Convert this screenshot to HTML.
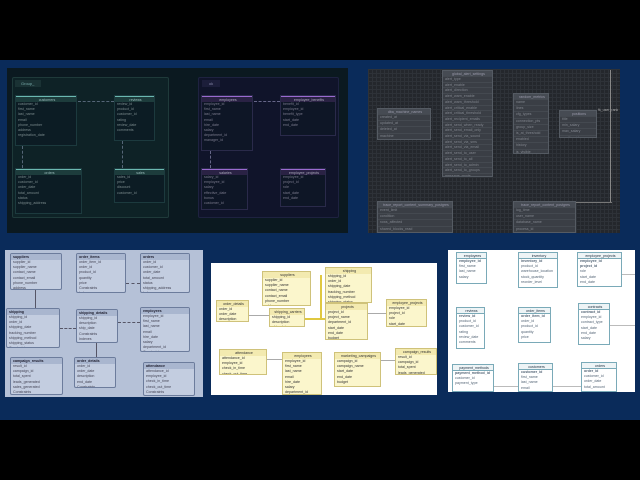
<!DOCTYPE html>
<html><head><meta charset="utf-8"><style>
*{margin:0;padding:0;box-sizing:border-box}
body{width:640px;height:480px;background:#000;position:relative;overflow:hidden;font-family:"Liberation Sans",sans-serif}
.band{position:absolute;left:0;top:60px;width:640px;height:360px;background:#0a2b5a}
.p{position:absolute;overflow:hidden}
.t{position:absolute;overflow:hidden;font-size:3.6px;line-height:5.2px;white-space:nowrap}
.t .h{text-align:center;height:6px;line-height:6px}
.t div{padding-left:2px}
.l{position:absolute}
.d1{background:#0c1c24;border:1px solid #1c3a3e}
.d1 .h{background:#1d3c3c;border-top:1px solid #6bb8b0;color:#9bb}
.d1 div{color:#7a8a8c}
.d1p{background:#0e1626;border:1px solid #2a2a4a}
.d1p .h{background:#2a2244;border-top:1px solid #9a6ad0;color:#aab}
.d1p div{color:#7a7a8c}
.g{background:#3a3e45;border:1px solid #555b63}
.g .h{background:#464b53;color:#99a}
.g div{color:#80858d;border-bottom:1px solid #444950}
.b{background:#c3cde0;border:1px solid #6c7c9c;border-radius:2px}
.b .h{background:#a9b6cf;color:#223;text-align:left;font-weight:bold}
.b div{color:#445}
.y{background:#fbf6cc;border:1px solid #cfc27a}
.y .h{background:#f3eab0;color:#333}
.y div{color:#333}
.w{background:#fff;border:1px solid #7aaab8}
.w .h{background:#eef4f6;border-bottom:1px solid #7aaab8;color:#234}
.w div{color:#567}
</style></head><body>
<div class="band"></div>

<div class="p" style="left:7px;top:68px;width:341px;height:165px;background:#0b1920"></div>
<div class="p" style="left:12px;top:77px;width:157px;height:141px;background:#0e2226;border:1px solid #1f3a3a;border-radius:2px"></div>
<div class="p" style="left:15px;top:80px;width:26px;height:7px;background:#1a3234;color:#7aa;font-size:4px;line-height:7px;padding-left:6px">Group_</div>
<div class="p" style="left:198px;top:77px;width:141px;height:141px;background:#10142a;border:1px solid #1e2240;border-radius:2px"></div>
<div class="p" style="left:202px;top:80px;width:18px;height:7px;background:#1c1e3a;color:#88a;font-size:4px;line-height:7px;text-align:center">ok</div>

<div class="t d1" style="left:15px;top:95px;width:62px;height:51px"><div class="h">customers</div><div>customer_id</div><div>first_name</div><div>last_name</div><div>email</div><div>phone_number</div><div>address</div><div>registration_date</div></div>
<div class="t d1" style="left:114px;top:95px;width:41px;height:46px"><div class="h">reviews</div><div>review_id</div><div>product_id</div><div>customer_id</div><div>rating</div><div>review_date</div><div>comments</div></div>
<div class="t d1" style="left:15px;top:168px;width:67px;height:46px"><div class="h">orders</div><div>order_id</div><div>customer_id</div><div>order_date</div><div>total_amount</div><div>status</div><div>shipping_address</div></div>
<div class="t d1" style="left:114px;top:168px;width:51px;height:35px"><div class="h">sales</div><div>sales_id</div><div>price</div><div>discount</div><div>customer_id</div></div>
<div class="t d1p" style="left:201px;top:95px;width:52px;height:56px"><div class="h">employees</div><div>employee_id</div><div>first_name</div><div>last_name</div><div>email</div><div>hire_date</div><div>salary</div><div>department_id</div><div>manager_id</div></div>
<div class="t d1p" style="left:280px;top:95px;width:56px;height:41px"><div class="h">employee_benefits</div><div>benefit_id</div><div>employee_id</div><div>benefit_type</div><div>start_date</div><div>end_date</div></div>
<div class="t d1p" style="left:201px;top:168px;width:47px;height:42px"><div class="h">salaries</div><div>salary_id</div><div>employee_id</div><div>salary</div><div>effective_date</div><div>bonus</div><div>customer_id</div></div>
<div class="t d1p" style="left:280px;top:168px;width:46px;height:39px"><div class="h">employee_projects</div><div>employee_id</div><div>project_id</div><div>role</div><div>start_date</div><div>end_date</div></div>
<div class="l" style="left:78px;top:101px;width:36px;border-top:1px dashed #567"></div>
<div class="l" style="left:254px;top:101px;width:26px;border-top:1px dashed #668"></div>
<div class="l" style="left:22px;top:146px;height:22px;border-left:1px dashed #567"></div>
<div class="l" style="left:122px;top:141px;height:27px;border-left:1px dashed #567"></div>
<div class="l" style="left:210px;top:151px;height:17px;border-left:1px dashed #668"></div>

<div class="p" style="left:368px;top:69px;width:252px;height:164px;background-color:#24272c;background-image:linear-gradient(#2e3238 1px,transparent 1px),linear-gradient(90deg,#2e3238 1px,transparent 1px);background-size:4px 4px"></div>
<div class="l" style="left:610px;top:70px;height:132px;border-left:1px solid #888"></div>
<div class="l" style="left:520px;top:202px;width:92px;border-top:1px solid #777"></div>
<div class="t g" style="left:377px;top:108px;width:54px;height:32px"><div class="h">dba_machine_names</div><div>created_at</div><div>updated_at</div><div>deleted_at</div><div>machine</div><div>id</div></div>
<div class="t g" style="left:442px;top:70px;width:51px;height:107px;line-height:4.7px"><div class="h">global_alert_settings</div><div>alert_type</div><div>alert_enable</div><div>alert_direction</div><div>alert_warn_enable</div><div>alert_warn_threshold</div><div>alert_critical_enable</div><div>alert_critical_threshold</div><div>alert_recipient_emails</div><div>alert_send_when_ready</div><div>alert_send_email_only</div><div>alert_send_via_sound</div><div>alert_send_via_sms</div><div>alert_send_via_email</div><div>alert_send_to_user</div><div>alert_send_to_all</div><div>alert_send_to_admin</div><div>alert_send_to_groups</div><div>message_mode</div><div>alert_send_via_slack</div><div>id</div></div>
<div class="t g" style="left:513px;top:93px;width:36px;height:61px"><div class="h">random_metrics</div><div>name</div><div>lines</div><div>cfg_types</div><div>connection_pts</div><div>group_size</div><div>is_at_threshold</div><div>enabled</div><div>history</div><div>is_visible</div><div>open_at</div><div>id</div></div>
<div class="t g" style="left:559px;top:110px;width:38px;height:28px"><div class="h">positions</div><div>title</div><div>min_salary</div><div>max_salary</div><div>position_id</div></div>
<div class="t g" style="left:377px;top:201px;width:76px;height:32px"><div class="h">trace_report_content_summary_postgres</div><div>event_limit</div><div>condition</div><div>rows_affected</div><div>shared_blocks_read</div><div>shared_blocks_written</div></div>
<div class="t g" style="left:513px;top:201px;width:63px;height:32px"><div class="h">trace_report_content_postgres</div><div>log_time</div><div>user_name</div><div>database_name</div><div>process_id</div><div>connection_from</div></div>
<div class="p" style="left:598px;top:108px;color:#aaa;font-size:3.5px">fk_user_rank</div>

<div class="p" style="left:5px;top:250px;width:198px;height:147px;background:#b5c1d7"></div>
<div class="t b" style="left:10px;top:253px;width:52px;height:37px"><div class="h">suppliers</div><div>supplier_id</div><div>supplier_name</div><div>contact_name</div><div>contact_email</div><div>phone_number</div><div>address</div><div>Constraints</div></div>
<div class="t b" style="left:76px;top:253px;width:50px;height:40px"><div class="h">order_items</div><div>order_item_id</div><div>order_id</div><div>product_id</div><div>quantity</div><div>price</div><div>Constraints</div><div>Indexes</div></div>
<div class="t b" style="left:140px;top:253px;width:50px;height:40px"><div class="h">orders</div><div>order_id</div><div>customer_id</div><div>order_date</div><div>total_amount</div><div>status</div><div>shipping_address</div><div>Indexes</div></div>
<div class="t b" style="left:6px;top:308px;width:54px;height:40px"><div class="h">shipping</div><div>shipping_id</div><div>order_id</div><div>shipping_date</div><div>tracking_number</div><div>shipping_method</div><div>shipping_status</div><div>Constraints</div></div>
<div class="t b" style="left:76px;top:309px;width:42px;height:34px"><div class="h">shipping_details</div><div>shipping_id</div><div>description</div><div>ship_date</div><div>Constraints</div><div>Indexes</div></div>
<div class="t b" style="left:140px;top:307px;width:50px;height:45px"><div class="h">employees</div><div>employee_id</div><div>first_name</div><div>last_name</div><div>email</div><div>hire_date</div><div>salary</div><div>department_id</div><div>Constraints</div></div>
<div class="t b" style="left:10px;top:357px;width:53px;height:38px"><div class="h">campaign_results</div><div>result_id</div><div>campaign_id</div><div>total_spent</div><div>leads_generated</div><div>sales_generated</div><div>Constraints</div></div>
<div class="t b" style="left:74px;top:357px;width:42px;height:31px"><div class="h">order_details</div><div>order_id</div><div>order_date</div><div>description</div><div>end_date</div><div>Constraints</div></div>
<div class="t b" style="left:143px;top:362px;width:52px;height:34px"><div class="h">attendance</div><div>attendance_id</div><div>employee_id</div><div>check_in_time</div><div>check_out_time</div><div>Constraints</div></div>
<div class="l" style="left:35px;top:290px;height:18px;border-left:1px solid #556"></div>
<div class="l" style="left:126px;top:283px;width:14px;border-top:1px dashed #556"></div>
<div class="l" style="left:60px;top:328px;width:16px;border-top:1px dashed #556"></div>
<div class="l" style="left:118px;top:322px;width:22px;border-top:1px dashed #556"></div>
<div class="l" style="left:96px;top:343px;height:14px;border-left:1px solid #556"></div>

<div class="p" style="left:211px;top:263px;width:226px;height:132px;background:#fff"></div>
<div class="t y" style="left:262px;top:271px;width:49px;height:35px"><div class="h">suppliers</div><div>supplier_id</div><div>supplier_name</div><div>contact_name</div><div>contact_email</div><div>phone_number</div><div>address</div></div>
<div class="t y" style="left:325px;top:267px;width:47px;height:36px"><div class="h">shipping</div><div>shipping_id</div><div>order_id</div><div>shipping_date</div><div>tracking_number</div><div>shipping_method</div><div>shipping_status</div></div>
<div class="t y" style="left:216px;top:300px;width:33px;height:22px"><div class="h">order_details</div><div>order_id</div><div>order_date</div><div>description</div><div>end_date</div></div>
<div class="t y" style="left:269px;top:308px;width:36px;height:19px"><div class="h">shipping_carriers</div><div>shipping_id</div><div>description</div><div>ship_date</div></div>
<div class="t y" style="left:325px;top:303px;width:43px;height:37px"><div class="h">projects</div><div>project_id</div><div>project_name</div><div>department_id</div><div>start_date</div><div>end_date</div><div>budget</div><div>status</div></div>
<div class="t y" style="left:386px;top:299px;width:41px;height:28px"><div class="h">employee_projects</div><div>employee_id</div><div>project_id</div><div>role</div><div>start_date</div><div>end_date</div></div>
<div class="t y" style="left:219px;top:349px;width:48px;height:26px"><div class="h">attendance</div><div>attendance_id</div><div>employee_id</div><div>check_in_time</div><div>check_out_time</div><div>attendance_date</div></div>
<div class="t y" style="left:282px;top:352px;width:40px;height:43px"><div class="h">employees</div><div>employee_id</div><div>first_name</div><div>last_name</div><div>email</div><div>hire_date</div><div>salary</div><div>department_id</div><div>manager_id</div></div>
<div class="t y" style="left:334px;top:352px;width:47px;height:35px"><div class="h">marketing_campaigns</div><div>campaign_id</div><div>campaign_name</div><div>start_date</div><div>end_date</div><div>budget</div></div>
<div class="t y" style="left:395px;top:348px;width:42px;height:27px"><div class="h">campaign_results</div><div>result_id</div><div>campaign_id</div><div>total_spent</div><div>leads_generated</div><div>sales_generated</div></div>
<div class="l" style="left:249px;top:315px;width:20px;border-top:1px solid #aaa"></div>
<div class="l" style="left:305px;top:318px;width:20px;border-top:2px solid #e0c840"></div>
<div class="l" style="left:320px;top:275px;height:44px;border-left:2px solid #e0c840"></div>
<div class="l" style="left:368px;top:313px;width:18px;border-top:1px solid #aaa"></div>
<div class="l" style="left:267px;top:359px;width:15px;border-top:1px solid #aaa"></div>
<div class="l" style="left:381px;top:360px;width:14px;border-top:1px solid #aaa"></div>

<div class="p" style="left:448px;top:250px;width:187px;height:142px;background:#fff"></div>
<div class="t w" style="left:456px;top:252px;width:31px;height:32px"><div class="h">employees</div><div><b>employee_id</b></div><div>first_name</div><div>last_name</div><div>salary</div></div>
<div class="t w" style="left:518px;top:252px;width:40px;height:36px"><div class="h">inventory</div><div><b>inventory_id</b></div><div>product_id</div><div>warehouse_location</div><div>stock_quantity</div><div>reorder_level</div></div>
<div class="t w" style="left:577px;top:252px;width:45px;height:35px"><div class="h">employee_projects</div><div><b>employee_id</b></div><div><b>project_id</b></div><div>role</div><div>start_date</div><div>end_date</div></div>
<div class="t w" style="left:456px;top:307px;width:29px;height:42px"><div class="h">reviews</div><div><b>review_id</b></div><div>product_id</div><div>customer_id</div><div>rating</div><div>review_date</div><div>comments</div></div>
<div class="t w" style="left:518px;top:307px;width:33px;height:36px"><div class="h">order_items</div><div><b>order_item_id</b></div><div>order_id</div><div>product_id</div><div>quantity</div><div>price</div></div>
<div class="t w" style="left:578px;top:303px;width:32px;height:42px"><div class="h">contracts</div><div><b>contract_id</b></div><div>employee_id</div><div>contract_type</div><div>start_date</div><div>end_date</div><div>salary</div></div>
<div class="t w" style="left:452px;top:364px;width:42px;height:28px"><div class="h">payment_methods</div><div><b>payment_method_id</b></div><div>customer_id</div><div>payment_type</div></div>
<div class="t w" style="left:518px;top:363px;width:35px;height:29px"><div class="h">customers</div><div><b>customer_id</b></div><div>first_name</div><div>last_name</div><div>email</div></div>
<div class="t w" style="left:581px;top:362px;width:36px;height:30px"><div class="h">orders</div><div><b>order_id</b></div><div>customer_id</div><div>order_date</div><div>total_amount</div></div>
<div class="l" style="left:622px;top:274px;width:13px;border-top:1px solid #bbb"></div>
<div class="l" style="left:610px;top:325px;width:25px;border-top:1px solid #bbb"></div>
<div class="l" style="left:494px;top:386px;width:24px;border-top:1px solid #bbb"></div>
<div class="l" style="left:553px;top:386px;width:28px;border-top:1px solid #bbb"></div>
</body></html>
